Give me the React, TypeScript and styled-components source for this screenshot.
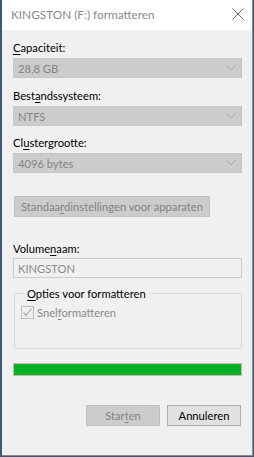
import styled, { createGlobalStyle } from "styled-components";

const GlobalStyle = createGlobalStyle`
  html, body {
    margin: 0;
    padding: 0;
    background: #3f5878;
  }
  body {
    font-family: Lato, "Liberation Sans", Arial, sans-serif;
    font-size: 11.2px;
  }
`;

const Desktop = styled.div`
  width: 254px;
  height: 457px;
  background: #3f5878;
  overflow: hidden;
`;

const Window = styled.div`
  margin-left: 2px;
  width: 250px;
  height: 455px;
  background: #f0f0f0;
  border-right: 1px solid #8c8c8c;
  border-bottom: 1px solid #8c8c8c;
  display: flex;
  flex-direction: column;
`;

const TitleBar = styled.div`
  height: 30px;
  background: #ffffff;
  display: flex;
  align-items: center;
  justify-content: space-between;
  padding: 0 8px 0 9px;
  flex-shrink: 0;
`;

const Title = styled.span`
  color: #8a8a8a;
  font-size: 11.8px;
  margin-top: -1px;
`;

const CloseButton = styled.div`
  width: 12px;
  height: 12px;
  display: flex;
  margin-top: -2px;
`;

const Body = styled.div`
  flex: 1;
  padding: 10px 10px 0 11px;
  display: flex;
  flex-direction: column;
`;

const Label = styled.div<{ $top?: number }>`
  height: 15px;
  line-height: 15px;
  color: #000;
  margin-top: ${(p) => p.$top ?? 0}px;
`;

const Key = styled.span`
  text-decoration: underline;
  text-underline-offset: 2px;
`;

const Combo = styled.div`
  margin-top: 3px;
  height: 20px;
  background: #cccccc;
  border: 1px solid #c6c6c6;
  box-sizing: border-box;
  display: flex;
  align-items: center;
  justify-content: space-between;
  padding: 0 5px 0 4px;
  color: #848484;
`;

const Chevron = styled.svg`
  width: 10px;
  height: 6px;
`;

const FlatButton = styled.div<{ $disabled?: boolean; $top?: number; $width?: number }>`
  margin-top: ${(p) => p.$top ?? 0}px;
  height: 21px;
  box-sizing: border-box;
  width: ${(p) => (p.$width ? `${p.$width}px` : "auto")};
  align-self: flex-start;
  display: flex;
  align-items: center;
  justify-content: center;
  padding: 0 6px;
  background: ${(p) => (p.$disabled ? "#cccccc" : "#e1e1e1")};
  border: 1px solid ${(p) => (p.$disabled ? "#bfbfbf" : "#adadad")};
  color: ${(p) => (p.$disabled ? "#838383" : "#000")};
`;

const DefaultsButton = styled(FlatButton)`
  margin-left: 1px;
`;

const TextInput = styled.div`
  margin-top: 2px;
  height: 20px;
  box-sizing: border-box;
  border: 1px solid #cccccc;
  background: #f0f0f0;
  color: #8a8a8a;
  display: flex;
  align-items: center;
  padding: 0 4px;
`;

const Group = styled.fieldset`
  margin: 8px 0 0 1px;
  padding: 4px 8px 0 6px;
  height: 63px;
  box-sizing: border-box;
  border: 1px solid #dcdcdc;
  min-width: 0;
`;

const Legend = styled.legend`
  padding: 0 2px;
  margin-left: 4px;
  line-height: 15px;
  color: #000;
`;

const CheckRow = styled.div`
  display: flex;
  align-items: center;
  gap: 3px;
  margin-top: 1px;
  color: #8a8a8a;
`;

const CheckBox = styled.div`
  width: 13px;
  height: 13px;
  box-sizing: border-box;
  border: 1px solid #bcbcbc;
  background: #f0f0f0;
  display: flex;
  align-items: center;
  justify-content: center;
`;

const Progress = styled.div`
  margin-top: 14px;
  height: 13px;
  box-sizing: border-box;
  border: 1px solid #bcbcbc;
  background: #e6e6e6;
`;

const ProgressFill = styled.div`
  height: 100%;
  background: #06b025;
`;

const Footer = styled.div`
  margin-top: 29px;
  display: flex;
  justify-content: flex-end;
  gap: 7px;
  padding-right: 1px;
`;

function ComboBox({ value }: { value: string }) {
  return (
    <Combo>
      <span>{value}</span>
      <Chevron viewBox="0 0 10 6">
        <polyline points="0.5,0.5 5,5 9.5,0.5" fill="none" stroke="#a6a6a6" strokeWidth="1" />
      </Chevron>
    </Combo>
  );
}

export default function App() {
  const progress = 100;
  return (
    <Desktop>
      <GlobalStyle />
      <Window>
        <TitleBar>
          <Title>KINGSTON (F:) formatteren</Title>
          <CloseButton>
            <svg width="12" height="12" viewBox="0 0 12 12">
              <path d="M0.5 0.5 L11.5 11.5 M11.5 0.5 L0.5 11.5" stroke="#6a6a6a" strokeWidth="1" fill="none" />
            </svg>
          </CloseButton>
        </TitleBar>
        <Body>
          <Label>
            <Key>C</Key>apaciteit:
          </Label>
          <ComboBox value="28,8 GB" />
          <Label $top={10}>
            Best<Key>a</Key>ndssysteem:
          </Label>
          <ComboBox value="NTFS" />
          <Label $top={9}>
            Cl<Key>u</Key>stergrootte:
          </Label>
          <ComboBox value="4096 bytes" />
          <DefaultsButton $disabled $top={23}>
            Standaa<Key>r</Key>dinstellingen voor apparaten
          </DefaultsButton>
          <Label $top={24}>
            Volume<Key>n</Key>aam:
          </Label>
          <TextInput>KINGSTON</TextInput>
          <Group>
            <Legend>
              <Key>O</Key>pties voor formatteren
            </Legend>
            <CheckRow>
              <CheckBox>
                <svg width="11" height="11" viewBox="0 0 11 11">
                  <polyline points="1.5,5.5 4,8.5 9.5,1.5" fill="none" stroke="#a8a8a8" strokeWidth="1.2" />
                </svg>
              </CheckBox>
              <span>
                Snel<Key>f</Key>ormatteren
              </span>
            </CheckRow>
          </Group>
          <Progress>
            <ProgressFill style={{ width: `${progress}%` }} />
          </Progress>
          <Footer>
            <FlatButton $disabled $width={74}>
              Star<Key>t</Key>en
            </FlatButton>
            <FlatButton $width={74}>Annuleren</FlatButton>
          </Footer>
        </Body>
      </Window>
    </Desktop>
  );
}
